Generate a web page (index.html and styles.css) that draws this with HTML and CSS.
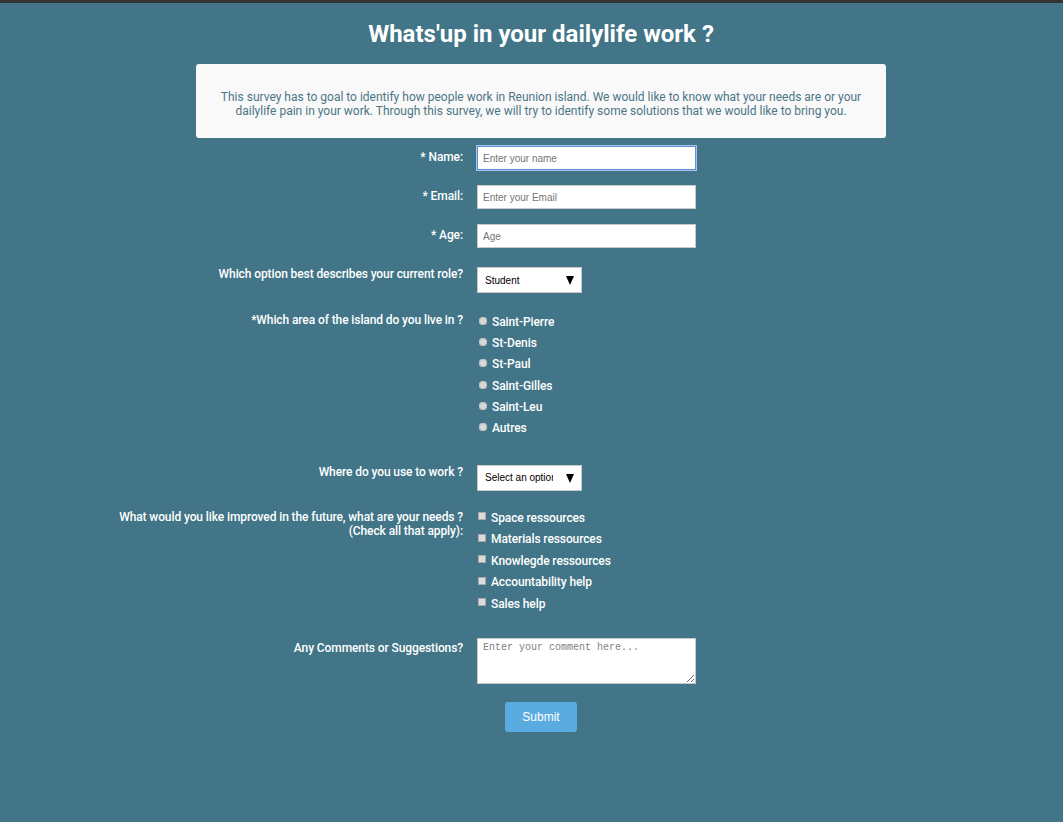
FILE: index.html
```html
<!DOCTYPE html>
<html lang="en">
<head>
<meta charset="utf-8">
<title>Survey</title>
<link rel="stylesheet" href="styles.css">
</head>
<body>
<div class="topbar"></div>
<main class="page">
  <h1 class="title">Whats'up in your dailylife work ?</h1>
  <div class="intro">
    <p>This survey has to goal to identify how people work in Reunion island. We would like to know what your needs are or your dailylife pain in your work. Through this survey, we will try to identify some solutions that we would like to bring you.</p>
  </div>
  <form class="form">
    <div class="row row-input">
      <label class="lbl" for="name">* Name:</label>
      <div class="ctl"><input class="field focused" id="name" type="text" placeholder="Enter your name"></div>
    </div>
    <div class="row row-input">
      <label class="lbl" for="email">* Email:</label>
      <div class="ctl"><input class="field" id="email" type="text" placeholder="Enter your Email"></div>
    </div>
    <div class="row row-input row-age">
      <label class="lbl" for="age">* Age:</label>
      <div class="ctl"><input class="field" id="age" type="text" placeholder="Age"></div>
    </div>
    <div class="row row-select row-role">
      <label class="lbl" for="role">Which option best describes your current role?</label>
      <div class="ctl"><span class="selwrap"><select class="sel" id="role"><option>Student</option></select></span></div>
    </div>
    <div class="row row-radio">
      <div class="lbl">*Which area of the island do you live in ?</div>
      <ul class="ctl list radios">
        <li><span class="radio"></span>Saint-Pierre</li>
        <li><span class="radio"></span>St-Denis</li>
        <li><span class="radio"></span>St-Paul</li>
        <li><span class="radio"></span>Saint-Gilles</li>
        <li><span class="radio"></span>Saint-Leu</li>
        <li><span class="radio"></span>Autres</li>
      </ul>
    </div>
    <div class="row row-select row-work">
      <label class="lbl" for="work">Where do you use to work ?</label>
      <div class="ctl"><span class="selwrap"><select class="sel" id="work"><option>Select an option</option></select></span></div>
    </div>
    <div class="row row-check">
      <div class="lbl lbl-multi"><span>What would you like improved in the future, what are your needs ?</span><span>(Check all that apply):</span></div>
      <ul class="ctl list checks">
        <li><span class="check"></span>Space ressources</li>
        <li><span class="check"></span>Materials ressources</li>
        <li><span class="check"></span>Knowlegde ressources</li>
        <li><span class="check"></span>Accountability help</li>
        <li><span class="check"></span>Sales help</li>
      </ul>
    </div>
    <div class="row row-comment">
      <label class="lbl" for="comment">Any Comments or Suggestions?</label>
      <div class="ctl"><textarea class="area" id="comment" placeholder="Enter your comment here..."></textarea></div>
    </div>
    <div class="actions">
      <button class="submit" type="button">Submit</button>
    </div>
  </form>
</main>
</body>
</html>
```

FILE: styles.css
```css
html, body {
  margin: 0;
  padding: 0;
  background: #417587;
  height: 100%;
}
body {
  font-family: Roboto, "Liberation Sans", Arial, sans-serif;
  color: #fff;
}
.topbar {
  height: 3px;
  background: #343434;
}
.page {
  padding-left: 19px;
  padding-bottom: 40px;
}
.title {
  margin: 17px 0 0;
  font-size: 24px;
  line-height: 28px;
  font-weight: 700;
  text-align: center;
}
.intro {
  width: 690px;
  margin: 16px auto 0;
  background: #f9f9f9;
  border-radius: 3px;
  box-sizing: border-box;
  padding: 26px 20px 20px;
}
.intro p {
  margin: 0;
  font-size: 12px;
  line-height: 14px;
  color: #4b7686;
  text-align: center;
}
.form {
  width: 850px;
  margin: 8px auto 0;
}
.row {
  display: flex;
  align-items: flex-start;
  gap: 14px;
}
.lbl {
  flex: 0 0 347px;
  text-align: right;
  font-size: 12px;
  line-height: 15px;
  font-weight: 500;
  letter-spacing: -0.1px;
  color: #fff;
}
.lbl-multi {
  display: flex;
  flex-direction: column;
  align-items: flex-end;
  white-space: nowrap;
}
.ctl {
  flex: 1 1 auto;
}
.row-input {
  margin-bottom: 15px;
}
.row-input .lbl {
  padding-top: 4px;
}
.row-age {
  margin-bottom: 19px;
}
.field {
  display: block;
  width: 219px;
  height: 24px;
  box-sizing: border-box;
  border: 1px solid #c8c8c8;
  background: #fff;
  padding: 0 5px;
  font-family: "Liberation Sans", Arial, sans-serif;
  font-size: 10px;
  color: #333;
  outline: none;
}
.field::placeholder {
  color: #757575;
}
.field.focused {
  border: 1px solid #5d8fdb;
  box-shadow: 0 0 0 1px #a9c4ee;
}
.selwrap {
  position: relative;
  display: inline-block;
}
.selwrap::after {
  content: "";
  position: absolute;
  right: 8px;
  top: 9px;
  border-left: 4.5px solid transparent;
  border-right: 4.5px solid transparent;
  border-top: 9px solid #000;
  pointer-events: none;
}
.sel {
  display: block;
  appearance: none;
  -webkit-appearance: none;
  width: 105px;
  height: 26px;
  box-sizing: border-box;
  border: 1px solid #c8c8c8;
  border-radius: 0;
  background: #fff;
  padding: 0 28px 0 7px;
  font-family: "Liberation Sans", Arial, sans-serif;
  font-size: 10px;
  color: #000;
  outline: none;
}
.row-role {
  margin-bottom: 18px;
}
.list {
  list-style: none;
  margin: 0;
  padding: 0;
}
.list li {
  display: flex;
  align-items: center;
  font-size: 12px;
  font-weight: 500;
  letter-spacing: -0.1px;
}
.radios li {
  height: 21.3px;
}
.radio {
  width: 8px;
  height: 8px;
  border-radius: 50%;
  background: #d9d9d9;
  box-shadow: inset 0 0 0 1px #bdbdbd;
  margin: -2px 5px 0 2px;
  flex: 0 0 auto;
}
.row-radio .lbl {
  padding-top: 2px;
}
.row-radio {
  margin-bottom: 26px;
}
.row-work {
  margin-bottom: 16px;
}
.checks li {
  height: 21.5px;
}
.check {
  width: 8px;
  height: 8px;
  background: #dcdcdc;
  box-shadow: inset 0 0 0 1px #a9a9a9;
  margin: -3px 5px 0 1px;
  flex: 0 0 auto;
}
.row-check .lbl {
  padding-top: 3px;
  line-height: 14px;
}
.row-check {
  margin-bottom: 24px;
}
.row-comment .lbl {
  padding-top: 3px;
}
.area {
  display: block;
  width: 219px;
  height: 46px;
  box-sizing: border-box;
  border: 1px solid #c8c8c8;
  padding: 3px 5px;
  font-family: "Liberation Mono", "DejaVu Sans Mono", monospace;
  font-size: 10px;
  resize: both;
  outline: none;
}
.area::placeholder {
  color: #808080;
}
.actions {
  display: flex;
  justify-content: center;
  margin-top: 18px;
}
.submit {
  width: 72px;
  height: 30px;
  border: none;
  border-radius: 3px;
  background: #5aabe0;
  color: #fff;
  font-family: "Liberation Sans", Arial, sans-serif;
  font-size: 12px;
  cursor: pointer;
}
```
